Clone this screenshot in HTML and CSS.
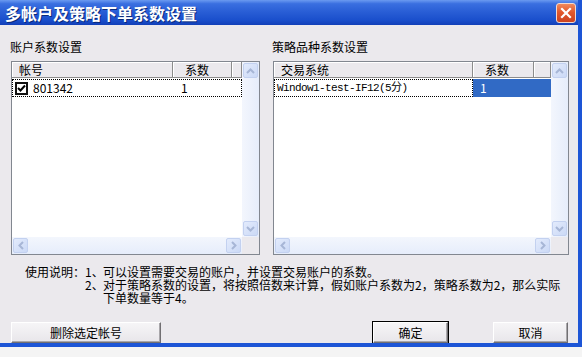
FILE: index.html
```html
<!DOCTYPE html>
<html lang="zh-CN">
  <head>
    <meta charset="UTF-8" />
    <title>多帐户及策略下单系数设置</title>
    <link rel="stylesheet" href="styles.css">
  </head>
  <body>
    <div class="window">
      <!-- 标题栏 -->
      <div class="titlebar">
        <span class="title">多帐户及策略下单系数设置</span>
        <div class="close-btn">
          <svg width="12" height="12" viewBox="0 0 12 12">
            <path d="M2 2 L10 10 M10 2 L2 10" stroke="#fff" stroke-width="2.2" stroke-linecap="square" />
          </svg>
        </div>
      </div>

      <div class="content">
        <div class="groups">
          <!-- 账户系数 -->
          <div class="group">
            <div class="group-label">账户系数设置</div>
            <div class="listbox">
              <div class="list-view">
                <div class="list-header cols-left">
                  <div class="hcol first">帐号</div>
                  <div class="hcol second">系数</div>
                  <div class="hcol"></div>
                </div>
                <div class="list-row cols-left focus-row">
                  <div class="cell first">
                    <span class="checkbox">
                      <svg width="9" height="9" viewBox="0 0 9 9">
                        <path d="M1 4 L3.5 6.5 L8 1.5" fill="none" stroke="#000" stroke-width="2" />
                      </svg>
                    </span>
                    801342
                  </div>
                  <div class="cell num">1</div>
                  <div class="cell"></div>
                </div>
              </div>
              <div class="vscroll">
                <div class="sbtn"><svg width="9" height="6" viewBox="0 0 9 6"><path d="M1 5 L4.5 1.5 L8 5" fill="none" stroke="#a7b6d6" stroke-width="2" /></svg></div>
                <div class="sbtn"><svg width="9" height="6" viewBox="0 0 9 6"><path d="M1 1 L4.5 4.5 L8 1" fill="none" stroke="#a7b6d6" stroke-width="2" /></svg></div>
              </div>
              <div class="hscroll">
                <div class="sbtn"><svg width="6" height="9" viewBox="0 0 6 9"><path d="M5 1 L1.5 4.5 L5 8" fill="none" stroke="#a7b6d6" stroke-width="2" /></svg></div>
                <div class="sbtn"><svg width="6" height="9" viewBox="0 0 6 9"><path d="M1 1 L4.5 4.5 L1 8" fill="none" stroke="#a7b6d6" stroke-width="2" /></svg></div>
              </div>
              <div class="corner"></div>
            </div>
          </div>

          <!-- 策略品种系数 -->
          <div class="group">
            <div class="group-label">策略品种系数设置</div>
            <div class="listbox">
              <div class="list-view">
                <div class="list-header cols-right">
                  <div class="hcol first">交易系统</div>
                  <div class="hcol second">系数</div>
                  <div class="hcol"></div>
                </div>
                <div class="list-row cols-right">
                  <div class="cell first focus-cell mono">Window1-test-IF12(5分)</div>
                  <div class="cell num selected">1</div>
                  <div class="cell selected"></div>
                </div>
              </div>
              <div class="vscroll">
                <div class="sbtn"><svg width="9" height="6" viewBox="0 0 9 6"><path d="M1 5 L4.5 1.5 L8 5" fill="none" stroke="#a7b6d6" stroke-width="2" /></svg></div>
                <div class="sbtn"><svg width="9" height="6" viewBox="0 0 9 6"><path d="M1 1 L4.5 4.5 L8 1" fill="none" stroke="#a7b6d6" stroke-width="2" /></svg></div>
              </div>
              <div class="hscroll">
                <div class="sbtn"><svg width="6" height="9" viewBox="0 0 6 9"><path d="M5 1 L1.5 4.5 L5 8" fill="none" stroke="#a7b6d6" stroke-width="2" /></svg></div>
                <div class="sbtn"><svg width="6" height="9" viewBox="0 0 6 9"><path d="M1 1 L4.5 4.5 L1 8" fill="none" stroke="#a7b6d6" stroke-width="2" /></svg></div>
              </div>
              <div class="corner"></div>
            </div>
          </div>
        </div>

        <!-- 使用说明 -->
        <div class="notes">
          <span class="notes-label">使用说明：</span>
          <div class="notes-list">
            <div class="note"><span class="note-no">1、</span><span>可以设置需要交易的账户，并设置交易账户的系数。</span></div>
            <div class="note"><span class="note-no">2、</span><span>对于策略系数的设置，将按照倍数来计算，假如账户系数为2，策略系数为2，那么实际<br>下单数量等于4。</span></div>
          </div>
        </div>

        <div class="buttons">
          <button class="btn btn-wide">删除选定帐号</button>
          <button class="btn btn-default">确定</button>
          <button class="btn">取消</button>
        </div>
      </div>
    </div>
  </body>
</html>
```

FILE: styles.css
```css
/* 全局 */
* {
  box-sizing: border-box;
}

body {
  margin: 0;
  background: #f4f4f4;
  font-family: 'Noto Sans CJK SC', sans-serif;
  font-size: 12px;
  color: #000;
}

/* 窗口 */
.window {
  width: 582px;
  height: 347px;
  background: #ebe9ed;
  border-right: 4px solid #1d55d6;
  border-bottom: 4px solid #1d55d6;
  display: flex;
  flex-direction: column;
  overflow: hidden;
}

/* 标题栏 */
.titlebar {
  flex: none;
  height: 25px;
  margin-right: -4px;
  background: linear-gradient(to bottom, #6b9af0 0%, #3a6fe0 15%, #2a5fd6 45%, #1a4fcc 80%, #123fb8 100%);
  display: flex;
  align-items: center;
  justify-content: space-between;
  padding: 0 6px 0 5px;
}

.title {
  color: #fff;
  font-weight: bold;
  font-size: 16px;
  line-height: 20px;
  text-shadow: 1px 1px 0 #0a2a7a;
}

.close-btn {
  width: 20px;
  height: 20px;
  border: 1px solid #f2d9cf;
  border-radius: 3px;
  background: linear-gradient(to bottom, #ef8a5e 0%, #e2582c 45%, #cc4220 100%);
  display: flex;
  align-items: center;
  justify-content: center;
}

/* 内容区 */
.content {
  flex: 1;
  min-height: 0;
  display: flex;
  flex-direction: column;
  padding: 15px 0 0 11px;
}

.groups {
  display: grid;
  grid-template-columns: 249px 296px;
  column-gap: 13px;
}

.group-label {
  height: 14px;
  line-height: 14px;
  margin: 0 0 7px -1px;
}

/* 列表框 */
.listbox {
  height: 194px;
  border: 1px solid #828790;
  background: #fff;
  display: grid;
  grid-template-columns: 1fr 17px;
  grid-template-rows: 1fr 17px;
}

.list-view {
  overflow: hidden;
}

.cols-left {
  display: grid;
  grid-template-columns: 161px 59px 1fr;
}

.cols-right {
  display: grid;
  grid-template-columns: 199px 61px 1fr;
}

.list-header {
  height: 16px;
  background: #ebe9ed;
  border-bottom: 1px solid #8c8c8c;
}

.hcol {
  line-height: 15px;
  border-right: 1px solid #8c8c8c;
  box-shadow: inset 1px 1px 0 #fff;
  padding-left: 7px;
}

.hcol.second {
  padding-left: 12px;
}

.list-row {
  height: 18px;
  margin-top: 1px;
}

.focus-row {
  border: 1px dotted #000;
}

.cell {
  line-height: 16px;
  display: flex;
  align-items: center;
  white-space: nowrap;
}

.cell.first {
  padding-left: 2px;
}

.cell.num {
  padding-left: 7px;
}

.focus-cell {
  border: 1px dotted #000;
}

.selected {
  background: #316ac5;
  color: #fff;
}

.mono {
  font-family: 'Liberation Mono', 'Noto Sans CJK SC', monospace;
  font-size: 11px;
  letter-spacing: -0.6px;
}

.checkbox {
  width: 13px;
  height: 13px;
  border: 2px solid #111;
  background: #fff;
  display: inline-flex;
  align-items: center;
  justify-content: center;
  margin-right: 5px;
}

/* 滚动条 */
.vscroll {
  background: linear-gradient(to right, #f3f6fd, #e6edfb);
  display: flex;
  flex-direction: column;
  justify-content: space-between;
  padding: 1px;
}

.hscroll {
  background: linear-gradient(to bottom, #f3f6fd, #e6edfb);
  display: flex;
  justify-content: space-between;
  padding: 1px;
}

.corner {
  background: #ebe9ed;
}

.sbtn {
  width: 15px;
  height: 15px;
  border: 1px solid #c3d1f0;
  border-radius: 2px;
  background: linear-gradient(135deg, #e3ebfc, #cbd9f6);
  display: flex;
  align-items: center;
  justify-content: center;
}

/* 使用说明 */
.notes {
  display: flex;
  margin: 10px 0 0 14px;
  line-height: 13px;
}

.note {
  display: flex;
  white-space: nowrap;
}

.note-no {
  flex: none;
  width: 18px;
}

/* 按钮 */
.buttons {
  flex: none;
  display: flex;
  margin-top: auto;
  padding-right: 10px;
}

.btn {
  height: 21px;
  width: 75px;
  font-family: 'Noto Sans CJK SC', sans-serif;
  font-size: 12px;
  padding: 0;
  background: linear-gradient(to bottom, #f6f5f7, #e8e6ea);
  border: 1px solid;
  border-color: #fff #716f72 #716f72 #fff;
  box-shadow: inset -1px -1px 0 #a8a6aa;
}

.btn-wide {
  width: 150px;
  margin-right: auto;
}

.btn-default {
  outline: 1px solid #000;
  margin-right: 45px;
}
```
